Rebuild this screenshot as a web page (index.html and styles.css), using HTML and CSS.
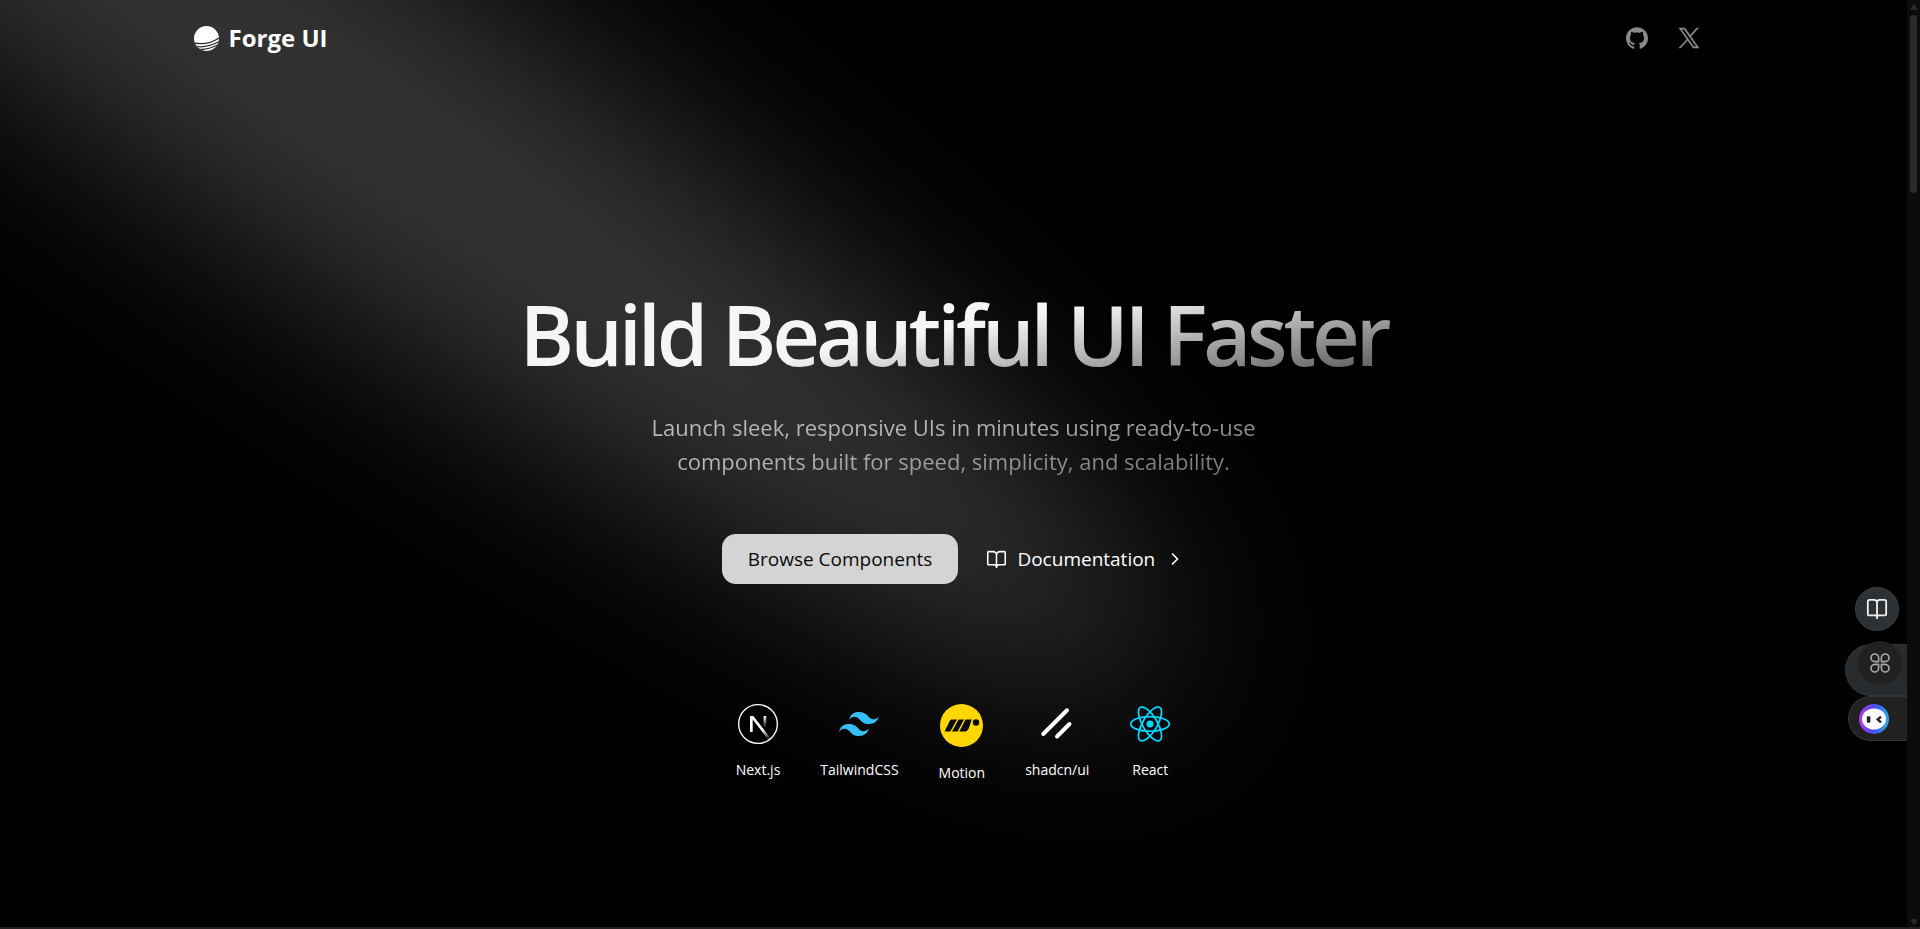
FILE: index.html
```html
<!DOCTYPE html>
<html lang="en">
<head>
<meta charset="utf-8">
<meta name="viewport" content="width=device-width, initial-scale=1">
<title>Forge UI</title>
<link rel="stylesheet" href="styles.css">
</head>
<body>
<div class="window">
  <div class="page">
    <svg class="spotlight" viewBox="0 0 1907 926" preserveAspectRatio="xMinYMin slice" aria-hidden="true">
      <defs>
        <filter id="beam-blur" filterUnits="userSpaceOnUse" x="-1100" y="-1100" width="3200" height="2600" color-interpolation-filters="sRGB">
          <feGaussianBlur stdDeviation="94"/>
        </filter>
      </defs>
      <g filter="url(#beam-blur)">
        <ellipse cx="300" cy="75" rx="1060" ry="168" transform="rotate(34.7 300 75)" fill="#fff" fill-opacity=".205"/>
      </g>
    </svg>

    <header class="nav">
      <a class="brand" href="#">
        <svg class="brand-mark" viewBox="0 0 25 25" aria-hidden="true">
          <defs><clipPath id="disc"><circle cx="12.5" cy="12.5" r="12.5"/></clipPath></defs>
          <g clip-path="url(#disc)">
            <rect width="25" height="25" fill="#fff"/>
            <path d="M0 17C8 18.6 17 17.4 25 12M1 20.4C9 21.6 17 20.2 25 15.6M4 23.4C11 24 17 22.6 24 18.8" fill="none" stroke="#303030" stroke-width="1.3"/>
          </g>
        </svg>
        <span>Forge UI</span>
      </a>
      <nav class="social">
        <a href="#" aria-label="GitHub">
          <svg width="22" height="22" viewBox="0 0 24 24" fill="currentColor"><path d="M12 .297c-6.63 0-12 5.373-12 12 0 5.303 3.438 9.8 8.205 11.385.6.113.82-.258.82-.577 0-.285-.01-1.04-.015-2.04-3.338.724-4.042-1.61-4.042-1.61C4.422 18.07 3.633 17.7 3.633 17.7c-1.087-.744.084-.729.084-.729 1.205.084 1.838 1.236 1.838 1.236 1.07 1.835 2.809 1.305 3.495.998.108-.776.417-1.305.76-1.605-2.665-.3-5.466-1.332-5.466-5.93 0-1.31.465-2.38 1.235-3.22-.135-.303-.54-1.523.105-3.176 0 0 1.005-.322 3.3 1.23.96-.267 1.98-.399 3-.405 1.02.006 2.04.138 3 .405 2.28-1.552 3.285-1.23 3.285-1.23.645 1.653.24 2.873.12 3.176.765.84 1.23 1.91 1.23 3.22 0 4.61-2.805 5.625-5.475 5.92.42.36.81 1.096.81 2.22 0 1.606-.015 2.896-.015 3.286 0 .315.21.69.825.57C20.565 22.092 24 17.592 24 12.297c0-6.627-5.373-12-12-12"/></svg>
        </a>
        <a href="#" aria-label="X">
          <svg width="22" height="22" viewBox="0 0 24 24" fill="currentColor" stroke="currentColor" stroke-width=".5"><path d="M14.095 10.316 22.286 1h-1.94L13.23 9.088 7.551 1H1l8.59 12.231L1 23h1.94l7.51-8.543L16.45 23H23l-8.905-12.684zm-2.658 3.022-.872-1.218L3.64 2.432h2.98l5.59 7.821.869 1.219 7.265 10.166h-2.982l-5.926-8.3z"/></svg>
        </a>
      </nav>
    </header>

    <main class="hero">
      <h1 class="title">Build Beautiful UI Faster</h1>
      <p class="lead">Launch sleek, responsive UIs in minutes using ready-to-use components built for speed, simplicity, and scalability.</p>
      <div class="actions">
        <a class="btn btn-primary" href="#">Browse Components</a>
        <a class="btn" href="#">
          <svg width="21" height="21" viewBox="0 0 24 24" fill="none" stroke="currentColor" stroke-width="1.8" stroke-linecap="round" stroke-linejoin="round" aria-hidden="true"><path d="M12 7v14M3 18a1 1 0 0 1-1-1V4a1 1 0 0 1 1-1h5a4 4 0 0 1 4 4 4 4 0 0 1 4-4h5a1 1 0 0 1 1 1v13a1 1 0 0 1-1 1h-6a3 3 0 0 0-3 3 3 3 0 0 0-3-3z"/></svg>
          <span>Documentation</span>
          <svg width="20" height="20" viewBox="0 0 24 24" fill="none" stroke="currentColor" stroke-width="2" stroke-linecap="round" stroke-linejoin="round" aria-hidden="true"><path d="m9 18 6-6-6-6"/></svg>
        </a>
      </div>
      <ul class="stack">
        <li>
          <svg width="40" height="40" viewBox="0 0 180 180" aria-hidden="true">
            <defs>
              <linearGradient id="next-a" x1="109" y1="116.5" x2="144.5" y2="160.5" gradientUnits="userSpaceOnUse"><stop stop-color="#fff"/><stop offset="1" stop-color="#fff" stop-opacity="0"/></linearGradient>
              <linearGradient id="next-b" x1="121" y1="54" x2="120.8" y2="106.875" gradientUnits="userSpaceOnUse"><stop stop-color="#fff"/><stop offset="1" stop-color="#fff" stop-opacity="0"/></linearGradient>
              <clipPath id="next-c"><circle cx="90" cy="90" r="90"/></clipPath>
            </defs>
            <circle cx="90" cy="90" r="87" fill="#000" stroke="#fff" stroke-width="6"/>
            <g clip-path="url(#next-c)">
              <path d="M149.508 157.52 69.142 54H54v71.97h12.114V69.384l73.885 95.461a90.304 90.304 0 0 0 9.509-7.325z" fill="url(#next-a)"/>
              <path d="M115 54h12v72h-12z" fill="url(#next-b)"/>
            </g>
          </svg>
          <span>Next.js</span>
        </li>
        <li>
          <svg width="40" height="40" viewBox="0 0 24 24" fill="#38bdf8" aria-hidden="true"><path d="M12.001 4.8c-3.2 0-5.2 1.6-6 4.8 1.2-1.6 2.6-2.2 4.2-1.8.913.228 1.565.89 2.288 1.624C13.666 10.618 15.027 12 18.001 12c3.2 0 5.2-1.6 6-4.8-1.2 1.6-2.6 2.2-4.2 1.8-.913-.228-1.565-.89-2.288-1.624C16.337 6.182 14.976 4.8 12.001 4.8zm-6 7.2c-3.2 0-5.2 1.6-6 4.8 1.2-1.6 2.6-2.2 4.2-1.8.913.228 1.565.89 2.288 1.624 1.177 1.194 2.538 2.576 5.512 2.576 3.2 0 5.2-1.6 6-4.8-1.2 1.6-2.6 2.2-4.2 1.8-.913-.228-1.565-.89-2.288-1.624C10.337 13.382 8.976 12 6.001 12z"/></svg>
          <span>TailwindCSS</span>
        </li>
        <li>
          <svg width="43" height="43" viewBox="0 0 43 43" aria-hidden="true">
            <circle cx="21.5" cy="21.5" r="21.5" fill="#ffd600"/>
            <path d="M11.4 15.5H17L10.3 27.4H4.6L9 18.4Q10 16 11.4 15.5zM18.6 15.5H24L17.6 27.4H12zM25.6 15.5H32Q31.2 16.6 30.7 18.4L29 23.7Q27.8 27.2 24.6 27.4H19.3z" fill="#0a0a0a"/>
            <circle cx="36" cy="18.5" r="3.2" fill="#0a0a0a"/>
          </svg>
          <span>Motion</span>
        </li>
        <li>
          <svg width="40" height="40" viewBox="0 0 256 256" fill="none" stroke="#fff" stroke-width="25" stroke-linecap="round" aria-hidden="true"><path d="M208 128 128 208M192 40 40 192"/></svg>
          <span>shadcn/ui</span>
        </li>
        <li>
          <svg width="42" height="40" viewBox="-12 -11.4 24 22.9" aria-hidden="true"><circle r="2" fill="#00d8ff"/><g fill="none" stroke="#00d8ff"><ellipse rx="11" ry="4.2"/><ellipse rx="11" ry="4.2" transform="rotate(60)"/><ellipse rx="11" ry="4.2" transform="rotate(120)"/></g></svg>
          <span>React</span>
        </li>
      </ul>
    </main>

    <aside class="dock" aria-label="Quick tools">
      <button class="round" type="button" aria-label="Reader">
        <svg width="22" height="22" viewBox="0 0 24 24" fill="none" stroke="#eee" stroke-width="2" stroke-linecap="round" stroke-linejoin="round"><path d="M12 5v17M3 19a1 1 0 0 1-1-1V4a2 2 0 0 1 2-2h5a3 3 0 0 1 3 3 3 3 0 0 1 3-3h5a2 2 0 0 1 2 2v14a1 1 0 0 1-1 1h-7a2 2 0 0 0-2 1 2 2 0 0 0-2-1z"/></svg>
      </button>
      <div class="tab tab-tools">
        <button class="bubble" type="button" aria-label="Shortcuts">
          <svg width="20" height="20" viewBox="0 0 20 20" fill="none" stroke="#aaa8ae" stroke-width="1.6" stroke-linejoin="round"><path d="M8.6 8.6H4.8A3.8 3.8 0 1 1 8.6 4.8zM11.4 8.6V4.8A3.8 3.8 0 1 1 15.2 8.6zM8.6 11.4V15.2A3.8 3.8 0 1 1 4.8 11.4zM11.4 11.4H15.2A3.8 3.8 0 1 1 11.4 15.2z"/></svg>
        </button>
      </div>
      <button class="tab tab-bot" type="button" aria-label="Assistant">
        <svg width="30" height="30" viewBox="0 0 30 30">
          <defs><linearGradient id="ring" x1="2" y1="22" x2="26" y2="24" gradientUnits="userSpaceOnUse"><stop stop-color="#a63df0"/><stop offset=".4" stop-color="#5a46f5"/><stop offset=".7" stop-color="#3a62f6"/><stop offset="1" stop-color="#2fa0ea"/></linearGradient></defs>
          <circle cx="15" cy="15" r="15" fill="url(#ring)"/>
          <ellipse cx="15" cy="15" rx="12" ry="10.5" fill="#fff"/>
          <rect x="7.8" y="12.2" width="3.6" height="6.6" rx="1.2" fill="#222"/>
          <path d="M22 12.6 18.6 15.5 22 18.4" fill="none" stroke="#222" stroke-width="2.4"/>
        </svg>
      </button>
    </aside>
  </div>
  <div class="scrollbar" aria-hidden="true">
    <svg width="8" height="6" viewBox="0 0 8 6"><path d="M4 .6 7.2 5.3H.8z" fill="#2c2c2c" stroke="#2c2c2c" stroke-linejoin="round"/></svg>
    <div class="track"><div class="thumb"></div></div>
    <svg width="8" height="6" viewBox="0 0 8 6"><path d="M4 5.4 7.2.7H.8z" fill="#2c2c2c" stroke="#2c2c2c" stroke-linejoin="round"/></svg>
  </div>
</div>
</body>
</html>
```
FILE: styles.css
```css
* {
  box-sizing: border-box;
}

body {
  margin: 0;
  background: #000;
  color: #fff;
  font-family: "Open Sans", "Noto Sans", sans-serif;
}

a {
  color: inherit;
  text-decoration: none;
}

button {
  border: 0;
  padding: 0;
  color: inherit;
  cursor: pointer;
}

svg {
  display: block;
  flex: none;
}

.window {
  display: flex;
  min-height: 100vh;
  border-bottom: 2px solid #231f20;
}

.page {
  position: relative;
  flex: 1;
  min-width: 0;
  overflow: hidden;
}

.spotlight {
  position: absolute;
  inset: 0;
  width: 100%;
  height: 100%;
}

.nav {
  position: relative;
  display: flex;
  align-items: center;
  justify-content: space-between;
  max-width: 1536px;
  margin: 0 auto;
  padding: 20px 22px 20px 8px;
}

.brand {
  display: flex;
  align-items: center;
  gap: 10px;
  font-size: 24px;
  font-weight: 700;
  line-height: 36px;
}

.brand-mark {
  width: 25px;
  height: 25px;
}

.social {
  display: flex;
  gap: 30px;
  color: #8a8a8a;
}

.hero {
  position: relative;
  display: flex;
  flex-direction: column;
  align-items: center;
  padding: 202px 24px 140px;
  text-align: center;
}

.title {
  margin: 0;
  padding: 0 6px;
  font-size: 83px;
  font-weight: 600;
  line-height: 112px;
  letter-spacing: -0.05em;
  background: linear-gradient(170deg, #f5f5f5 0%, #f5f5f5 48%, #404040 100%);
  background-clip: text;
  -webkit-background-clip: text;
  color: transparent;
}

.lead {
  max-width: 640px;
  margin: 20px 0 0;
  font-size: 22px;
  line-height: 34px;
  background: linear-gradient(170deg, #bdbdbd 0%, #b5b5b5 40%, #6a6a6a 100%);
  background-clip: text;
  -webkit-background-clip: text;
  color: transparent;
}

.actions {
  display: flex;
  align-items: center;
  gap: 28px;
  margin-top: 56px;
}

.btn {
  display: flex;
  align-items: center;
  gap: 10px;
  font-size: 19px;
  font-weight: 500;
  line-height: 50px;
}

.btn-primary {
  padding: 0 26px;
  border-radius: 14px;
  background: #d4d4d4;
  color: #0a0a0a;
}

.stack {
  display: flex;
  align-items: flex-start;
  gap: 40px;
  margin: 120px 0 0;
  padding: 0;
  list-style: none;
  font-size: 14px;
  line-height: 20px;
}

.stack li {
  display: flex;
  flex-direction: column;
  align-items: center;
  gap: 16px;
}

.dock {
  position: absolute;
  right: 0;
  top: 587px;
  display: flex;
  flex-direction: column;
  align-items: flex-end;
}

.round,
.bubble {
  display: grid;
  place-items: center;
  width: 44px;
  height: 44px;
  border-radius: 50%;
}

.round {
  margin: 0 8px 13px 0;
  background: #2d3134;
  border: 1px solid #3c4043;
}

.tab {
  display: flex;
  border: 1px solid #333638;
  border-right: 0;
  border-radius: 26px 0 0 26px;
}

.tab-tools {
  width: 62px;
  height: 52px;
  padding-left: 12px;
  background: #292c2e;
}

.bubble {
  margin-top: -4px;
  background: #212121;
}

.tab-bot {
  align-items: center;
  width: 59px;
  height: 45px;
  padding-left: 10px;
  background: #212121;
}

.scrollbar {
  display: flex;
  flex-direction: column;
  align-items: center;
  width: 13px;
  padding: 4px 0 2px;
  background: #0b0b0b;
}

.track {
  flex: 1;
  padding: 5px 0;
}

.thumb {
  width: 7px;
  height: 178px;
  border-radius: 4px;
  background: #2a2a2a;
}
```
